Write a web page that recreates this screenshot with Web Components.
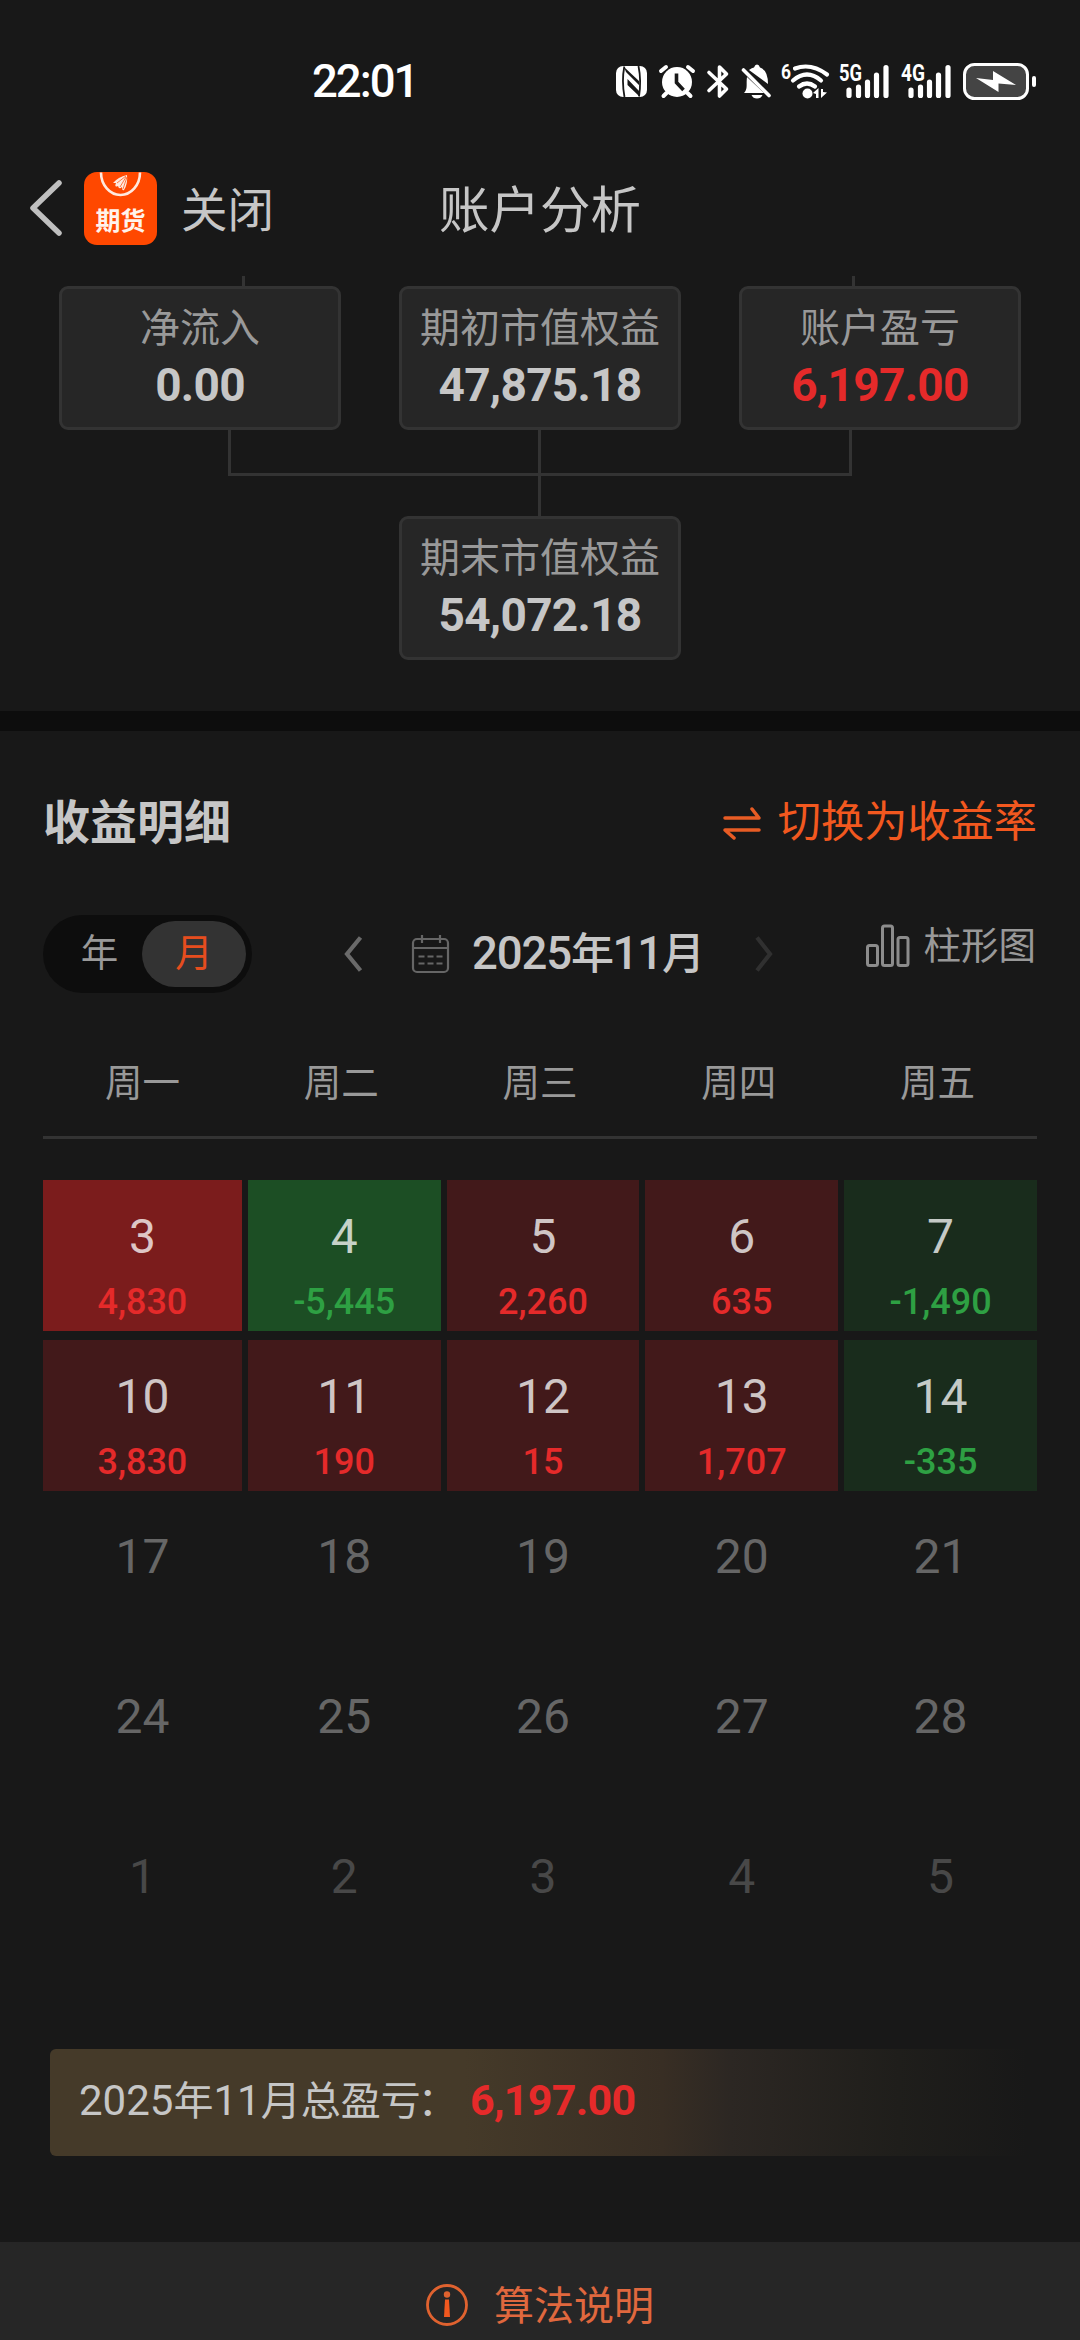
<!DOCTYPE html>
<html lang="zh-CN">
<head>
<meta charset="utf-8">
<title>账户分析</title>
<style>
  html {
    background-color: #181818;
  }

  body {
    color: #c6c6c6;
    font-family: Roboto, "Noto Sans CJK SC", sans-serif;
    height: 2340px;
    margin: 0;
    overflow: hidden;
    width: 1080px;
  }
</style>
</head>
<body>
<account-page></account-page>

<script>
// status-bar

class StatusBar extends HTMLElement {
  constructor() {
    super();

    const shadowRoot = this.attachShadow({mode: 'open'});
    shadowRoot.innerHTML = `
      <style>
        :host {
          align-items: center;
          box-sizing: border-box;
          color: white;
          display: flex;
          height: 162px;
          justify-content: space-between;
          padding: 0 43px 0 312px;
        }

        .time {
          font-size: 45.5px;
          font-weight: 500;
          letter-spacing: -2px;
          line-height: 60px;
          padding-top: 2px;
        }

        svg {
          display: block;
        }

        text {
          font-family: Roboto, sans-serif;
          font-weight: 700;
        }
      </style>
      <span class="time">22:01</span>
      <svg width="421" height="60" viewBox="616 50 421 60" fill="#fff">
        <!-- nfc -->
        <rect x="616" y="65" width="31" height="31" rx="7"/>
        <path d="M624.3 65.500Q621.500 80 624.500 96M638.500 65Q641.500 80 639 95.500" fill="none" stroke="#181818" stroke-width="1.800"/>
        <path d="M624 66L639 80V84L626 71ZM627.500 78L639 90V95L627.500 84Z" fill="#181818"/>
        <!-- alarm -->
        <circle cx="677" cy="81" r="15"/>
        <path d="M661 70l5-4M693 70l-5-4M666.500 92l-3 3M687.500 92l3 3" fill="none" stroke="#fff" stroke-width="4" stroke-linecap="round"/>
        <path d="M676.500 72.500V81.500L683.500 89" fill="none" stroke="#181818" stroke-width="3.600"/>
        <!-- bluetooth -->
        <path d="M709 71.500L726.500 88L719.500 95V66L726.500 73L709 89.500" fill="none" stroke="#fff" stroke-width="3.600" stroke-linecap="round" stroke-linejoin="round"/>
        <!-- muted bell -->
        <path d="M744 92C748 88 746 84 747 76L764 92ZM749 69Q752 66.500 754 66.500Q755 63.500 757 63.500Q759 63.500 760 66.500Q768 69 768 83ZM751.500 94H762.500Q761 97.500 757 97.500Q753 97.500 751.500 94Z"/>
        <path d="M743.500 69L769 94.500" stroke="#fff" stroke-width="3.600" stroke-linecap="round"/>
        <!-- wifi -->
        <text x="781" y="78" font-size="21" textLength="10" lengthAdjust="spacingAndGlyphs">6</text>
        <path d="M795 67.500Q811 61.500 827 73.500M793 79.500Q807 67.500 821 79.500M799 85.500Q807 79.500 815 85.500" fill="none" stroke="#fff" stroke-width="4.200" stroke-linecap="round"/>
        <circle cx="807.500" cy="92.500" r="5"/>
        <path d="M813 92L818.500 87V97H816V93ZM821 97V88H823V91L827 91.500Z"/>
        <!-- signals -->
        <text x="839" y="79.500" font-size="23" textLength="23" lengthAdjust="spacingAndGlyphs">5G</text>
        <path d="M849 89V94.500M858.500 86V94.500M867.500 81V94.500M876.500 74V94.500M886 66.500V94.500" fill="none" stroke="#fff" stroke-width="5.200" stroke-linecap="round"/>
        <text x="901" y="79.500" font-size="23" textLength="24" lengthAdjust="spacingAndGlyphs">4G</text>
        <path d="M911 89V94.500M920.500 86V94.500M929.500 81V94.500M938.500 74V94.500M948 66.500V94.500" fill="none" stroke="#fff" stroke-width="5.200" stroke-linecap="round"/>
        <!-- battery -->
        <rect x="964.500" y="63.500" width="63" height="34" rx="10" fill="#444" stroke="#fff" stroke-width="3"/>
        <path d="M976 77L993 79V70L1016 84L998.500 82.500V91Z"/>
        <rect x="1032" y="75" width="4" height="11" rx="2"/>
      </svg>
    `;
  }
}

// nav-bar

class NavBar extends HTMLElement {
  constructor() {
    super();

    const shadowRoot = this.attachShadow({mode: 'open'});
    shadowRoot.innerHTML = `
      <style>
        :host {
          align-items: center;
          display: grid;
          grid-template-columns: 1fr auto 1fr;
          height: 92px;
          padding-left: 28px;
          padding-right: 28px;
        }

        .left {
          align-items: center;
          display: flex;
        }

        .logo {
          margin: 0 24px 0 20px;
        }

        .close {
          font-size: 46.5px;
          line-height: 60px;
          padding-top: 5px;
        }

        .title {
          font-size: 50.5px;
          line-height: 64px;
          padding-top: 5px;
        }

        svg {
          display: block;
        }

        text {
          font-family: "Noto Sans CJK SC", sans-serif;
          font-weight: 700;
        }
      </style>
      <div class="left">
        <svg width="36" height="58" viewBox="0 0 36 58">
          <path d="M31 4L5 29L31 54" fill="none" stroke="#bfbfbf" stroke-width="5.500" stroke-linecap="round" stroke-linejoin="round"/>
        </svg>
        <svg class="logo" width="73" height="73" viewBox="0 0 73 73">
          <rect width="73" height="73" rx="13" fill="#ff4800"/>
          <path d="M17 0.500A19.500 22.500 0 0 0 56 0.500" fill="none" stroke="#ffe9df" stroke-width="2.600"/>
          <path d="M29 11Q34 5 43 3Q44 12 40 18Q38 19 38 15Q35 18 34 14Q30 16 32 11Z" fill="#ffe9df"/>
          <path d="M33 11L42 4M36 15L42 5M39 17L43 5" stroke="#ff4800" stroke-width="0.700"/>
          <text x="11.500" y="57.500" font-size="25" fill="#fff3ec">期货</text>
        </svg>
        <span class="close">关闭</span>
      </div>
      <div class="title">账户分析</div>
    `;
  }
}

// equity-card

class EquityCard extends HTMLElement {
  constructor() {
    super();

    const shadowRoot = this.attachShadow({mode: 'open'});
    shadowRoot.innerHTML = `
      <style>
        :host {
          align-items: center;
          background-color: #262626;
          border: 3px solid #333;
          border-radius: 9px;
          box-sizing: border-box;
          display: flex;
          flex-direction: column;
          height: 144px;
          padding-top: 10px;
          width: 282px;
        }

        .label {
          color: #999;
          font-size: 40px;
          line-height: 60px;
        }

        .value {
          font-size: 46px;
          font-weight: 700;
          letter-spacing: -0.7px;
          line-height: 52px;
        }

        :host([rise]) .value {
          color: #e52a2a;
        }
      </style>
      <span class="label"><slot name="label"></slot></span>
      <span class="value"><slot></slot></span>
    `;
  }
}

// equity-flow, cards joined by connector lines

class EquityFlow extends HTMLElement {
  constructor() {
    super();

    const shadowRoot = this.attachShadow({mode: 'open'});
    shadowRoot.innerHTML = `
      <style>
        :host {
          display: block;
          height: 435px;
          padding-top: 22px;
        }

        svg {
          display: block;
        }

        .row {
          display: flex;
          gap: 58px;
          justify-content: center;
        }
      </style>
      <svg width="1080" height="10" fill="#333">
        <rect x="242" width="3" height="10"/>
        <rect x="852" width="3" height="10"/>
      </svg>
      <div class="row">
        <equity-card><span slot="label">净流入</span>0.00</equity-card>
        <equity-card><span slot="label">期初市值权益</span>47,875.18</equity-card>
        <equity-card rise><span slot="label">账户盈亏</span>6,197.00</equity-card>
      </div>
      <svg width="1080" height="86" fill="#333">
        <rect x="228" width="3" height="46"/>
        <rect x="849" width="3" height="46"/>
        <rect x="228" y="43" width="624" height="3"/>
        <rect x="538" width="3" height="86"/>
      </svg>
      <div class="row">
        <equity-card><span slot="label">期末市值权益</span>54,072.18</equity-card>
      </div>
    `;
  }
}

// period-bar

class PeriodBar extends HTMLElement {
  constructor() {
    super();

    const shadowRoot = this.attachShadow({mode: 'open'});
    shadowRoot.innerHTML = `
      <style>
        :host {
          align-items: center;
          display: flex;
          height: 78px;
        }

        .toggle {
          background-color: #0d0d0d;
          border-radius: 39px;
          box-sizing: border-box;
          color: #999;
          display: grid;
          font-size: 37.5px;
          grid-template-columns: 93px 104px;
          height: 78px;
          line-height: 64px;
          padding: 6px;
          text-align: center;
          width: 209px;
        }

        .toggle .year {
          padding-left: 8px;
        }

        .toggle .on {
          background-color: #333;
          border-radius: 33px;
          color: #e64d1e;
          height: 66px;
        }

        .prev {
          margin-left: 90px;
        }

        .calendar {
          margin-left: 47px;
        }

        .month {
          font-size: 43px;
          font-weight: 500;
          letter-spacing: -1.6px;
          line-height: 60px;
          margin-left: 22px;
          white-space: nowrap;
          width: 282px;
        }

        .month b {
          font-size: 45.5px;
          font-weight: 500;
          letter-spacing: -1.1px;
        }

        .chart {
          align-items: center;
          color: #999;
          display: flex;
          font-size: 37.5px;
          gap: 14px;
          line-height: 44px;
          margin: 0 1px 16px auto;
        }

        svg {
          display: block;
          fill: none;
        }
      </style>
      <div class="toggle"><span class="year">年</span><span class="on">月</span></div>
      <svg class="prev" width="22" height="38" viewBox="0 0 22 38">
        <path d="M18.500 2.500L5 19L18.500 35.500" stroke="#6a6a6a" stroke-width="4.200"/>
      </svg>
      <svg class="calendar" width="39" height="40" viewBox="0 0 39 40">
        <rect x="2" y="5" width="35" height="33" rx="4" stroke="#666" stroke-width="2.200"/>
        <path d="M2 14H37M11 1V9M29 1V9M7.500 22.500H13.500M16.500 22.500H22.500M25.500 22.500H31.500M7.500 29.500H13.500M16.500 29.500H22.500M25.500 29.500H31.500" stroke="#666" stroke-width="2.200"/>
      </svg>
      <span class="month"><b>2025</b>年<b>11</b>月</span>
      <svg width="22" height="38" viewBox="0 0 22 38">
        <path d="M3 2.500L16 19L3 35.500" stroke="#303030" stroke-width="4.200"/>
      </svg>
      <div class="chart">
        <svg width="45" height="44" viewBox="0 0 45 44">
          <g stroke="#8c8c8c" stroke-width="3">
            <rect x="2.500" y="21.500" width="10" height="20" rx="2"/>
            <rect x="17.500" y="2" width="10" height="39.500" rx="2"/>
            <rect x="33" y="13.500" width="10" height="28" rx="2"/>
          </g>
        </svg>
        柱形图
      </div>
    `;
  }
}

// day-cell

class DayCell extends HTMLElement {
  constructor() {
    super();

    const shadowRoot = this.attachShadow({mode: 'open'});
    shadowRoot.innerHTML = `
      <style>
        :host {
          align-items: center;
          box-sizing: border-box;
          color: #666;
          display: flex;
          flex-direction: column;
          height: 151px;
          margin-left: 6px;
          padding-top: 27px;
        }

        :host([first]) {
          margin-left: 0;
        }

        :host([next]) {
          color: #484848;
        }

        :host([kind]) {
          color: rgb(255, 255, 255, 0.75);
        }

        :host([kind="up"]) {
          --amount: #e52a2a;
          background-color: #42191a;
        }

        :host([kind="up-max"]) {
          --amount: #e52a2a;
          background-color: #7b1c1c;
        }

        :host([kind="down"]) {
          --amount: #2ea043;
          background-color: #192c1c;
        }

        :host([kind="down-max"]) {
          --amount: #2ea043;
          background-color: #1c4e24;
        }

        .day {
          font-size: 48px;
          line-height: 60px;
        }

        .amount {
          color: var(--amount);
          font-size: 36px;
          font-weight: 500;
          line-height: 40px;
          margin-top: 15px;
        }
      </style>
      <span class="day"></span>
      <span class="amount"></span>
    `;
  }

  connectedCallback() {
    this.shadowRoot.querySelector(".day").textContent = this.getAttribute("day");
    this.shadowRoot.querySelector(".amount").textContent = this.getAttribute("amount") || "";
  }
}

// profit-calendar

class ProfitCalendar extends HTMLElement {
  constructor() {
    super();

    const shadowRoot = this.attachShadow({mode: 'open'});
    shadowRoot.innerHTML = `
      <style>
        :host {
          display: block;
        }

        .week, .days {
          display: grid;
          grid-template-columns: repeat(5, 1fr);
        }

        .week {
          border-bottom: 3px solid #333;
          color: #999;
          font-size: 37.5px;
          height: 83px;
          line-height: 60px;
          text-align: center;
        }

        .days {
          padding-top: 41px;
          row-gap: 9px;
        }
      </style>
      <div class="week">
        <span>周一</span><span>周二</span><span>周三</span><span>周四</span><span>周五</span>
      </div>
      <div class="days"></div>
    `;
  }

  connectedCallback() {
    const days = [
      [3, "4,830", "up-max"], [4, "-5,445", "down-max"], [5, "2,260", "up"], [6, "635", "up"], [7, "-1,490", "down"],
      [10, "3,830", "up"], [11, "190", "up"], [12, "15", "up"], [13, "1,707", "up"], [14, "-335", "down"],
      [17], [18], [19], [20], [21],
      [24], [25], [26], [27], [28],
      [1], [2], [3], [4], [5]
    ];
    this.shadowRoot.querySelector(".days").innerHTML = days.map(([day, amount, kind], i) => `
      <day-cell day="${day}" ${amount ? `amount="${amount}" kind="${kind}"` : ""} ${i % 5 === 0 ? "first" : ""} ${i >= 20 ? "next" : ""}></day-cell>
    `).join("");
  }
}

// month-total

class MonthTotal extends HTMLElement {
  constructor() {
    super();

    const shadowRoot = this.attachShadow({mode: 'open'});
    shadowRoot.innerHTML = `
      <style>
        :host {
          align-items: baseline;
          background: linear-gradient(90deg, #453a29 0%, #453a29 42%, #382e24 62%, #2c2723 69%, #1f1e1b 86%, #181818 99%);
          border-radius: 6px 0 0 6px;
          box-sizing: border-box;
          display: flex;
          font-size: 40px;
          height: 107px;
          line-height: 102px;
          padding-left: 29px;
        }

        .label {
          white-space: nowrap;
          width: 391px;
        }

        .label b {
          font-size: 42px;
          font-weight: 400;
        }

        .colon {
          margin-left: -3px;
        }

        .value {
          color: #e52a2a;
          font-size: 43px;
          font-weight: 700;
          letter-spacing: -0.7px;
        }
      </style>
      <span class="label"><b>2025</b>年<b>11</b>月总盈亏<span class="colon">：</span></span>
      <span class="value"><slot></slot></span>
    `;
  }
}

// profit-detail

class ProfitDetail extends HTMLElement {
  constructor() {
    super();

    const shadowRoot = this.attachShadow({mode: 'open'});
    shadowRoot.innerHTML = `
      <style>
        :host {
          border-top: 20px solid #0d0d0d;
          box-sizing: border-box;
          display: block;
          height: 1531px;
          padding: 60px 43px 0;
        }

        .head {
          align-items: center;
          display: flex;
          height: 64px;
          justify-content: space-between;
          margin-bottom: 60px;
        }

        h2 {
          font-size: 47px;
          font-weight: 700;
          line-height: 60px;
          margin: 0;
        }

        .switch {
          align-items: center;
          color: #f2581f;
          display: flex;
          font-size: 43.2px;
          gap: 17px;
          line-height: 60px;
        }

        svg {
          display: block;
        }

        profit-calendar {
          margin-top: 60px;
        }

        month-total {
          margin: 78px 0 0 7px;
        }
      </style>
      <div class="head">
        <h2>收益明细</h2>
        <div class="switch">
          <svg width="38" height="34" viewBox="0 0 38 34" fill="none" stroke="#e85c24" stroke-width="3.500" stroke-linecap="round" stroke-linejoin="round">
            <path d="M2 12H36L29 3M36 24H2L11 32"/>
          </svg>
          切换为收益率
        </div>
      </div>
      <period-bar></period-bar>
      <profit-calendar></profit-calendar>
      <month-total>6,197.00</month-total>
    `;
  }
}

// help-footer

class HelpFooter extends HTMLElement {
  constructor() {
    super();

    const shadowRoot = this.attachShadow({mode: 'open'});
    shadowRoot.innerHTML = `
      <style>
        :host {
          align-items: center;
          background-color: #262626;
          box-sizing: border-box;
          color: #e0683e;
          display: flex;
          font-size: 40px;
          gap: 26px;
          height: 98px;
          justify-content: center;
          line-height: 60px;
          padding-top: 28px;
        }

        svg {
          display: block;
        }

        .text {
          padding-top: 4px;
        }
      </style>
      <svg width="42" height="42" viewBox="0 0 42 42">
        <circle cx="21" cy="21" r="19.500" fill="none" stroke="#e0622f" stroke-width="2.800"/>
        <circle cx="21" cy="10.500" r="3.200" fill="#e0622f"/>
        <path d="M19 15.500H23L24 33H18Z" fill="#f2581f"/>
      </svg>
      <span class="text"><slot></slot></span>
    `;
  }
}

// account-page

class AccountPage extends HTMLElement {
  constructor() {
    super();

    const shadowRoot = this.attachShadow({mode: 'open'});
    shadowRoot.innerHTML = `
      <style>
        :host {
          display: flex;
          flex-direction: column;
          height: 2340px;
        }
      </style>
      <status-bar></status-bar>
      <nav-bar></nav-bar>
      <equity-flow></equity-flow>
      <profit-detail></profit-detail>
      <help-footer>算法说明</help-footer>
    `;
  }
}


customElements.define('status-bar', StatusBar);
customElements.define('nav-bar', NavBar);
customElements.define('equity-card', EquityCard);
customElements.define('equity-flow', EquityFlow);
customElements.define('period-bar', PeriodBar);
customElements.define('day-cell', DayCell);
customElements.define('profit-calendar', ProfitCalendar);
customElements.define('month-total', MonthTotal);
customElements.define('profit-detail', ProfitDetail);
customElements.define('help-footer', HelpFooter);
customElements.define('account-page', AccountPage);
</script>
</body>
</html>
